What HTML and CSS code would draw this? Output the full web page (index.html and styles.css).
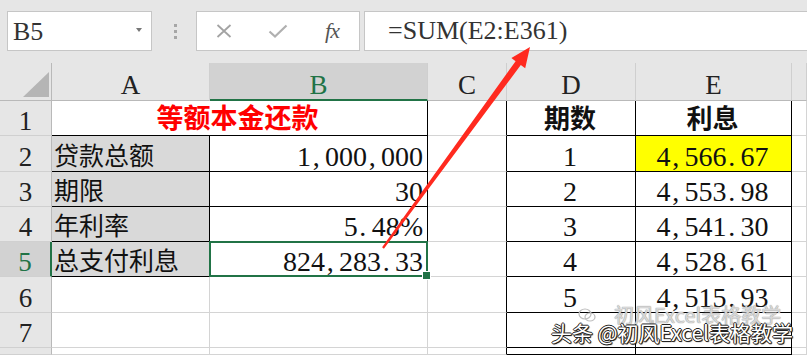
FILE: index.html
```html
<!DOCTYPE html>
<html lang="zh">
<head>
<meta charset="utf-8">
<title>等额本金还款</title>
<link rel="stylesheet" href="styles.css">
</head>
<body>
<div class="app">
  <div class="topbar">
    <div class="namebox"><span class="nb-text">B5</span><span class="caret"></span></div>
    <div class="dots"><i></i><i></i><i></i></div>
    <div class="fnbox">
      <span class="slot"><svg width="16" height="14" viewBox="0 0 16 14"><path d="M1.5 1 L14.5 13 M14.5 1 L1.5 13" stroke="#a3a3a3" stroke-width="1.8" fill="none"/></svg></span>
      <span class="slot"><svg width="20" height="14" viewBox="0 0 20 14"><path d="M1.5 7.5 L7 12.5 L18.5 1.5" stroke="#b0b0b0" stroke-width="2.2" fill="none"/></svg></span>
      <span class="slot fx">fx</span>
    </div>
    <div class="formula">=SUM(E2:E361)</div>
  </div>

  <div class="sheet">
    <!-- header row -->
    <div class="hd corner"><div class="tri"></div></div>
    <div class="hd col">A</div>
    <div class="hd col selc">B</div>
    <div class="hd col">C</div>
    <div class="hd col">D</div>
    <div class="hd col">E</div>
    <div class="hd col"></div>

    <!-- row 1 -->
    <div class="hd row">1</div>
    <div class="c title span2 bb br">等额本金还款</div>
    <div class="c br"></div>
    <div class="c zh bold center bb br">期数</div>
    <div class="c zh bold center bb br">利息</div>
    <div class="c"></div>

    <!-- row 2 -->
    <div class="hd row">2</div>
    <div class="c zh gray bb br">贷款总额</div>
    <div class="c right bb br">1<span class="p">,</span>000<span class="p">,</span>000</div>
    <div class="c br"></div>
    <div class="c center bb br">1</div>
    <div class="c center bb br yellow">4<span class="p">,</span>566<span class="p">.</span>67</div>
    <div class="c"></div>

    <!-- row 3 -->
    <div class="hd row">3</div>
    <div class="c zh gray bb br">期限</div>
    <div class="c right bb br">30</div>
    <div class="c br"></div>
    <div class="c center bb br">2</div>
    <div class="c center bb br">4<span class="p">,</span>553<span class="p">.</span>98</div>
    <div class="c"></div>

    <!-- row 4 -->
    <div class="hd row">4</div>
    <div class="c zh gray bb br">年利率</div>
    <div class="c right bb br">5<span class="p">.</span>48%</div>
    <div class="c br"></div>
    <div class="c center bb br">3</div>
    <div class="c center bb br">4<span class="p">,</span>541<span class="p">.</span>30</div>
    <div class="c"></div>

    <!-- row 5 -->
    <div class="hd row selr">5</div>
    <div class="c zh gray bb br">总支付利息</div>
    <div class="c right bb br sel">824<span class="p">,</span>283<span class="p">.</span>33</div>
    <div class="c br"></div>
    <div class="c center bb br">4</div>
    <div class="c center bb br">4<span class="p">,</span>528<span class="p">.</span>61</div>
    <div class="c"></div>

    <!-- row 6 -->
    <div class="hd row">6</div>
    <div class="c"></div>
    <div class="c"></div>
    <div class="c br"></div>
    <div class="c center bb br">5</div>
    <div class="c center bb br">4<span class="p">,</span>515<span class="p">.</span>93</div>
    <div class="c"></div>

    <!-- row 7 -->
    <div class="hd row">7</div>
    <div class="c"></div>
    <div class="c"></div>
    <div class="c br"></div>
    <div class="c bb br"></div>
    <div class="c bb br"></div>
    <div class="c"></div>

    <!-- row 8 (partial) -->
    <div class="hd row"></div>
    <div class="c"></div>
    <div class="c"></div>
    <div class="c br"></div>
    <div class="c bb br"></div>
    <div class="c bb br"></div>
    <div class="c"></div>
  </div>

  <svg class="arrow" width="807" height="355" viewBox="0 0 807 355">
    <polygon points="383.9,248.7 520.8,65 525.2,68.2 530,47 511.4,58 515.6,61.2 382.1,247.3" fill="#ff2a1f"/>
  </svg>

  <div class="wm-ghost">
    <svg class="wx" width="18" height="14" viewBox="0 0 18 14"><ellipse cx="7" cy="6" rx="6" ry="5" fill="none" stroke="#bdbdbd" stroke-width="1.2"/><ellipse cx="12" cy="9" rx="5" ry="4" fill="none" stroke="#bdbdbd" stroke-width="1.2"/></svg>
    <span>初风Excel表格教学</span>
  </div>
  <div class="wm">头条 @初风Excel表格教学</div>
</div>
</body>
</html>
```
FILE: styles.css
```css
* { box-sizing: border-box; }
html, body { margin: 0; padding: 0; }
body { background: #e6e6e6; }

.app {
  position: relative;
  width: 807px;
  height: 355px;
  overflow: hidden;
  background: #e6e6e6;
  font-family: "Liberation Serif", "Noto Sans CJK SC", serif;
  color: #111;
}

/* ---------- formula bar ---------- */
.topbar {
  height: 63px;
  display: flex;
  align-items: flex-start;
  padding: 11px 0 0 7px;
}
.namebox {
  width: 150px;
  height: 40px;
  background: #fff;
  border: 1px solid #c6c6c6;
  display: flex;
  align-items: center;
  justify-content: space-between;
  padding: 0 9px 0 5px;
}
.nb-text { font-size: 26px; line-height: 26px; color: #333; padding-top: 2px; }
.caret {
  width: 0; height: 0;
  border-left: 3.5px solid transparent;
  border-right: 3.5px solid transparent;
  border-top: 4px solid #777;
  margin-bottom: 2px;
}
.dots {
  width: 46px;
  height: 40px;
  display: flex;
  flex-direction: column;
  align-items: center;
  justify-content: center;
  gap: 3px;
  padding-left: 3px;
}
.dots i { display: block; width: 3px; height: 3px; background: #a6a6a6; }
.fnbox {
  width: 164px;
  height: 40px;
  background: #fff;
  border: 1px solid #c6c6c6;
  display: flex;
  align-items: center;
}
.slot {
  width: 54px;
  display: flex;
  justify-content: center;
  align-items: center;
}
.fx {
  font-style: italic;
  font-size: 22px;
  color: #555;
  font-family: "Liberation Serif", serif;
  letter-spacing: -1px;
}
.formula {
  margin-left: 4px;
  width: 460px;
  height: 40px;
  background: #fff;
  border: 1px solid #c6c6c6;
  border-right: none;
  font-size: 26px;
  line-height: 38px;
  padding-left: 23px;
  color: #333;
}

/* ---------- sheet grid ---------- */
.sheet {
  display: grid;
  grid-template-columns: 52px 158px 218px 79px 129px 156px 15px;
  grid-template-rows: 38px 35px 36px 35px 35px 35px 36px 35px 7px;
  background: #fff;
}

.hd {
  background: #e6e6e6;
  color: #222;
  font-size: 27px;
  line-height: 28px;
  display: flex;
  justify-content: center;
  align-items: flex-end;
  overflow: hidden;
}
.hd.col { border-right: 1px solid #cfcfcf; border-bottom: 1px solid #b9b9b9; padding-bottom: 1px; }
.hd.row { border-right: 1px solid #b9b9b9; border-bottom: 1px solid #d0d0d0; padding-bottom: 0; }
.hd.corner {
  border-right: 1px solid #b9b9b9;
  border-bottom: 1px solid #b9b9b9;
  justify-content: flex-end;
  align-items: flex-end;
  padding: 0 2px 3px 0;
}
.tri {
  width: 26px;
  height: 25px;
  background: #b5b5b5;
  clip-path: polygon(100% 0, 100% 100%, 0 100%);
}
.hd.selc { background: #d2d2d2; color: #217346; border-bottom: 2px solid #217346; padding-bottom: 0; }
.hd.selr { background: #d2d2d2; color: #217346; border-right: 2px solid #217346; }

.c {
  position: relative;
  border-right: 1px solid #d4d4d4;
  border-bottom: 1px solid #d4d4d4;
  display: flex;
  align-items: flex-end;
  font-size: 28px;
  line-height: 28px;
  padding: 0 4px 0 2px;
  white-space: nowrap;
  overflow: visible;
  background: #fff;
}
.c.zh { font-size: 25px; padding-bottom: 0; }
.c.bold { font-weight: bold; font-size: 26px; padding-bottom: 1px; }
.c.center { justify-content: center; }
.c.right { justify-content: flex-end; }
.c.bb { border-bottom-color: #000; }
.c.br { border-right-color: #000; }
.c.gray { background: #d9d9d9; }
.c.yellow { background: #ffff00; }
.c.span2 { grid-column: span 2; }
.c.title {
  justify-content: center;
  color: #ff0000;
  font-weight: bold;
  font-size: 27px;
  padding-bottom: 2px;
  padding-left: 0;
}

.p {
  display: inline-block;
  width: 0.5em;
  padding-left: 0.06em;
}

.sel::before {
  content: "";
  position: absolute;
  top: -1px; left: -1px; right: -1px; bottom: -1px;
  border: 2px solid #217346;
  z-index: 2;
}
.sel::after {
  content: "";
  position: absolute;
  right: -4px;
  bottom: -4px;
  width: 7px;
  height: 7px;
  background: #217346;
  border: 1px solid #fff;
  z-index: 3;
}

/* ---------- overlays ---------- */
.arrow {
  position: absolute;
  left: 0;
  top: 0;
  pointer-events: none;
  z-index: 5;
}

.wm-ghost {
  position: absolute;
  left: 578px;
  top: 303px;
  display: flex;
  align-items: center;
  gap: 18px;
  font-family: "Noto Sans CJK SC", "Noto Sans", sans-serif;
  font-size: 20px;
  line-height: 24px;
  color: rgba(235, 235, 235, 0.75);
  text-shadow: 0 0 1px #9a9a9a, 0 0 1px #9a9a9a;
  z-index: 6;
}
.wm {
  position: absolute;
  left: 551px;
  top: 319px;
  font-family: "Noto Sans CJK SC", "Noto Sans", sans-serif;
  font-size: 21px;
  line-height: 26px;
  color: #fff;
  text-shadow: 1px 0 0 #222, -1px 0 0 #222, 0 1px 0 #222, 0 -1px 0 #222, 1px 1px 1px #000;
  z-index: 7;
  white-space: nowrap;
}
```
